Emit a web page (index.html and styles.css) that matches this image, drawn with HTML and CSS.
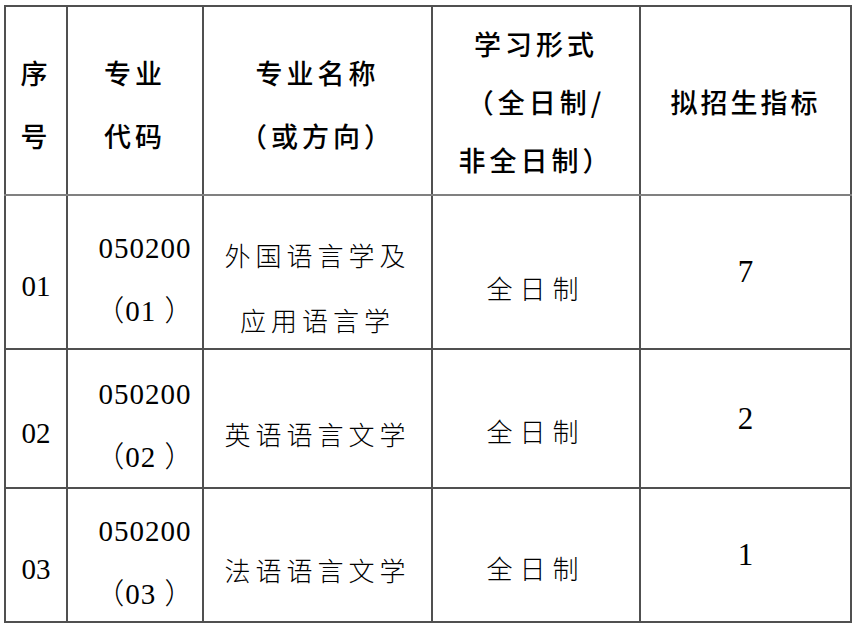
FILE: index.html
```html
<!DOCTYPE html>
<html lang="zh-CN">
<head>
<meta charset="utf-8">
<title>招生专业目录</title>
<link rel="stylesheet" href="styles.css">
</head>
<body>
<table class="plan">
  <colgroup>
    <col class="c-no">
    <col class="c-code">
    <col class="c-name">
    <col class="c-form">
    <col class="c-quota">
  </colgroup>
  <thead>
    <tr class="r-head">
      <th class="h2">序<br>号</th>
      <th class="h2">专业<br>代码</th>
      <th class="h2">专业名称<br>（或方向）</th>
      <th class="h3">学习形式<br>（全日制/<br>非全日制）</th>
      <th class="h1">拟招生指标</th>
    </tr>
  </thead>
  <tbody>
    <tr class="r1">
      <td class="no">01</td>
      <td class="code"><div class="stack"><span>050200</span><span>（01&nbsp;）</span></div></td>
      <td class="name"><div class="stack"><span>外国语言学及</span><span>应用语言学</span></div></td>
      <td class="form form-tall">全日制</td>
      <td class="quota">7</td>
    </tr>
    <tr class="r2">
      <td class="no">02</td>
      <td class="code"><div class="stack"><span>050200</span><span>（02&nbsp;）</span></div></td>
      <td class="name">英语语言文学</td>
      <td class="form">全日制</td>
      <td class="quota">2</td>
    </tr>
    <tr class="r3">
      <td class="no">03</td>
      <td class="code"><div class="stack"><span>050200</span><span>（03&nbsp;）</span></div></td>
      <td class="name">法语语言文学</td>
      <td class="form">全日制</td>
      <td class="quota">1</td>
    </tr>
  </tbody>
</table>
</body>
</html>
```
FILE: styles.css
```css
html, body {
  margin: 0;
  padding: 0;
  background: #ffffff;
}

.plan {
  margin: 5px 0 0 4px;
  width: 846px;
  table-layout: fixed;
  border-collapse: collapse;
  color: #000;
}

.c-no { width: 62px; }
.c-code { width: 136px; }
.c-name { width: 229px; }
.c-form { width: 208px; }
.c-quota { width: 211px; }

.plan th,
.plan td {
  border: 2px solid #505050;
  padding: 0;
  text-align: center;
  vertical-align: middle;
}

.plan th {
  font-family: "Noto Sans CJK SC", sans-serif;
  font-weight: 500;
  font-size: 27px;
  letter-spacing: 4px;
  border-bottom-color: #808080;
}

.plan .h2 {
  line-height: 63px;
  padding-top: 7px;
}

.plan .h3 {
  line-height: 58px;
  padding-top: 2px;
}

.plan .h1 {
  line-height: 40px;
  padding-top: 2px;
  letter-spacing: 3px;
}

.r-head { height: 189px; }
.r1 { height: 154px; }
.r2 { height: 139px; }
.r3 { height: 134px; }

.plan td {
  font-family: "Liberation Serif", "Noto Sans CJK SC", serif;
  font-weight: 300;
  line-height: 34px;
}

.stack {
  display: flex;
  flex-direction: column;
  align-items: center;
}

.plan .no {
  font-size: 29px;
  padding-top: 28px;
}

.plan .code {
  font-size: 29px;
  letter-spacing: 1px;
  padding-left: 20px;
  padding-top: 14px;
}

.code .stack {
  gap: 29px;
}

.plan .name {
  font-family: "Noto Sans CJK SC", sans-serif;
  font-weight: 300;
  font-size: 26px;
  letter-spacing: 5px;
  padding-top: 30px;
}

.name .stack {
  gap: 31px;
}

.plan .form {
  font-family: "Noto Sans CJK SC", sans-serif;
  font-weight: 300;
  font-size: 26px;
  letter-spacing: 7px;
  padding-top: 25px;
}

.plan .form-tall {
  padding-top: 32px;
}

.plan .quota {
  font-size: 31px;
}
```
